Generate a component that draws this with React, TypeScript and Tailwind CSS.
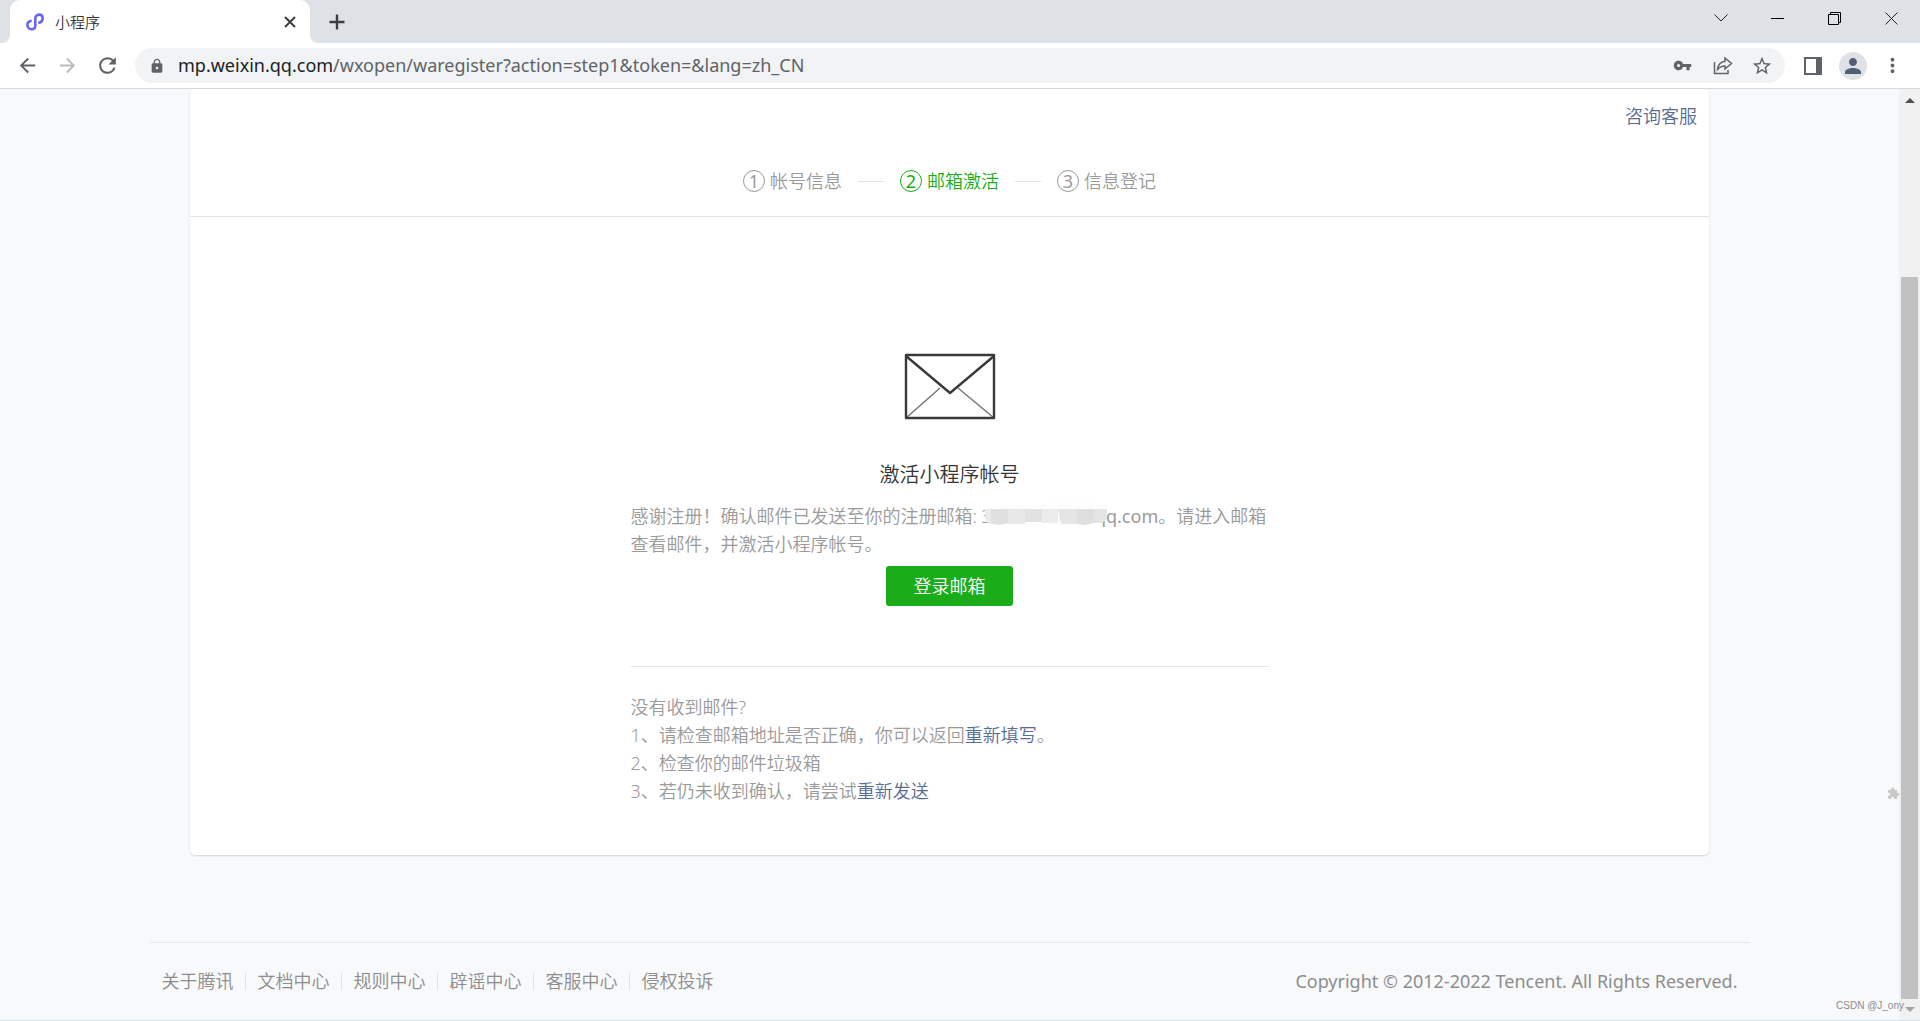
import React from 'react'
import {
  MdArrowBack,
  MdArrowForward,
  MdExtension,
  MdLock,
  MdMoreVert,
  MdPerson,
  MdRefresh,
  MdStarBorder,
  MdVpnKey,
} from 'react-icons/md'

const steps = [
  { number: 1, label: '帐号信息', active: false },
  { number: 2, label: '邮箱激活', active: true },
  { number: 3, label: '信息登记', active: false },
]

const footerLinks = ['关于腾讯', '文档中心', '规则中心', '辟谣中心', '客服中心', '侵权投诉']

function TabStrip() {
  return (
    <div className="flex h-[43px] items-stretch bg-[#dee1e6]">
      <div className="w-[10px] bg-white">
        <div className="h-full rounded-br-lg bg-[#dee1e6]" />
      </div>
      <div className="flex w-[300px] items-center rounded-t-[10px] bg-white pl-4 pr-[10px]">
        <svg width="18" height="18" viewBox="0 0 18 18" fill="none" stroke="#6467f0" strokeWidth="2.6" strokeLinecap="round">
          <path d="M4.6 7.9C2.7 8.4 1.4 9.9 1.4 11.8c0 2.6 1.8 4.4 4 4.4 2.3 0 3.9-1.6 3.9-3.8V5.5c0-2.2 1.6-3.9 3.8-3.9 2.1 0 3.6 1.5 3.6 3.6 0 2.2-1.5 4-3.4 4.5" />
        </svg>
        <span className="ml-[11px] flex-1 text-[15px] font-[350] leading-5">小程序</span>
        <button aria-label="关闭标签页" className="flex size-5 items-center justify-center">
          <svg width="12" height="12" viewBox="0 0 12 12" stroke="#3c4043" strokeWidth="2">
            <path d="M1 1l10 10M11 1L1 11" />
          </svg>
        </button>
      </div>
      <div className="w-[10px] bg-white">
        <div className="h-full rounded-bl-lg bg-[#dee1e6]" />
      </div>
      <button aria-label="新标签页" className="ml-[7px] flex w-5 items-center justify-center">
        <svg width="16" height="16" viewBox="0 0 16 16" stroke="#3c4043" strokeWidth="2.4">
          <path d="M8 0.5v15M0.5 8h15" />
        </svg>
      </button>
      <div className="flex-1" />
      <div className="flex h-9 items-stretch">
        <button aria-label="搜索标签页" className="flex w-[57px] items-center justify-center">
          <svg width="14" height="8" viewBox="0 0 14 8" fill="none" stroke="#202124">
            <path d="M0.5 0.5L7 7l6.5-6.5" />
          </svg>
        </button>
        <button aria-label="最小化" className="flex w-[57px] items-center justify-center">
          <span className="h-px w-[13px] bg-black" />
        </button>
        <button aria-label="还原" className="flex w-[57px] items-center justify-center">
          <svg width="13" height="13" viewBox="0 0 13 13" fill="none" stroke="#000">
            <path d="M0.5 2.5h10v10h-10zM2.5 2.5v-2h10v10h-2" />
          </svg>
        </button>
        <button aria-label="关闭" className="flex w-[57px] items-center justify-center">
          <svg width="13" height="13" viewBox="0 0 13 13" stroke="#202124">
            <path d="M0.5 0.5l12 12M12.5 0.5l-12 12" />
          </svg>
        </button>
      </div>
    </div>
  )
}

function Toolbar() {
  return (
    <div className="flex h-[46px] items-center border-b border-[#d7d9dc] bg-white pl-4 pr-4 text-[#5f6368]">
      <button aria-label="后退">
        <MdArrowBack size={23} />
      </button>
      <button aria-label="前进" className="ml-[17px] text-[#babcbe]">
        <MdArrowForward size={23} />
      </button>
      <button aria-label="重新加载" className="ml-4">
        <MdRefresh size={25} />
      </button>
      <div className="ml-[15px] flex h-[35px] flex-1 items-center rounded-full bg-[#f1f3f4] pl-[14px] pr-3">
        <MdLock size={16} />
        <a href="#" className="ml-[13px] flex-1 pb-[2px] text-[18px] leading-6">
          <span className="text-[#202124]">mp.weixin.qq.com</span>
          /wxopen/waregister?action=step1&amp;token=&amp;lang=zh_CN
        </a>
        <button aria-label="密码">
          <MdVpnKey size={19} />
        </button>
        <button aria-label="分享" className="ml-[21px]">
          <svg width="20" height="20" viewBox="0 0 20 20" fill="none" stroke="currentColor" strokeWidth="1.5">
            <path d="M1.5 6v11.5h13.5V14" />
            <path d="M12 2l6.5 5.5L12 13V10C8.5 10 6.5 11.2 4.5 13.5 5 9 7.5 5.8 12 5.2z" />
          </svg>
        </button>
        <button aria-label="收藏" className="ml-[18px]">
          <MdStarBorder size={22} />
        </button>
      </div>
      <button aria-label="侧边栏" className="ml-[19px]">
        <svg width="18" height="18" viewBox="0 0 18 18" fill="none">
          <path d="M1 1h16v16H1z" stroke="currentColor" strokeWidth="2" />
          <path d="M12 1h5v16h-5z" fill="currentColor" />
        </svg>
      </button>
      <button aria-label="个人资料" className="ml-[17px] flex size-7 items-center justify-center rounded-full bg-[#dee1e6] text-[#4f5d75]">
        <MdPerson size={24} />
      </button>
      <button aria-label="菜单" className="ml-[14px]">
        <MdMoreVert size={23} />
      </button>
    </div>
  )
}

function Steps() {
  return (
    <ol className="flex h-[71px] items-center justify-center border-b border-[#e4e4e4] text-[#9a9a9a]">
      {steps.map((step, index) => (
        <li key={step.number} className="flex items-center">
          {index > 0 && <span className="mx-4 h-px w-[26px] bg-[#e4e4e4]" />}
          <span className={step.active ? 'flex items-center gap-[5px] text-[#1aad19]' : 'flex items-center gap-[5px]'}>
            <span className="flex size-[22px] items-center justify-center rounded-full border border-current font-normal leading-5">
              {step.number}
            </span>
            {step.label}
          </span>
        </li>
      ))}
    </ol>
  )
}

function Envelope() {
  return (
    <svg width="92" height="68" viewBox="0 0 92 68" fill="none" strokeLinejoin="round">
      <path d="M2 65L36 35M90 65L54 35" stroke="#777" strokeWidth="1.5" />
      <path d="M2 2h88v63H2z" stroke="#3a3a3a" strokeWidth="2.4" />
      <path d="M2 3l44 37L90 3" stroke="#3a3a3a" strokeWidth="2.4" />
    </svg>
  )
}

// mosaic that hides the name part of the mail address
function Mosaic() {
  return (
    <svg width="122" height="26" viewBox="0 0 122 26" className="absolute left-2 top-0">
      <path d="M0 6Q60-1 122 2V10H0z" fill="#fdfdfd" />
      <path d="M0 7h22v15H5Q0 20 0 15z" fill="#ebebeb" />
      <path d="M6 7h17v14l-8 2-9-1z" fill="#e0e0e0" />
      <path d="M23 7h17v15H23z" fill="#e8e8e8" />
      <path d="M40 7h17v13H40z" fill="#e2e2e2" />
      <path d="M57 7h16v14H57z" fill="#ececec" />
      <path d="M73 7h26v15H76z" fill="#e5e5e5" />
      <path d="M92 7h17v14l-9 2-8-1z" fill="#dfdfdf" />
      <path d="M109 7h13v7q-1 6-6 7h-7z" fill="#e4e4e4" />
    </svg>
  )
}

function Scrollbar() {
  return (
    <div className="flex w-[21px] flex-col items-center bg-[#f1f1f1]">
      <div className="flex h-[22px] items-center">
        <svg width="10" height="5" viewBox="0 0 10 5" fill="#505050">
          <path d="M0 5l5-5 5 5z" />
        </svg>
      </div>
      <div className="flex-[166]" />
      <div className="w-[17px] flex-[722] bg-[#c1c1c1]" />
      <div className="flex h-[21px] items-center">
        <svg width="10" height="5" viewBox="0 0 10 5" fill="#a3a3a3">
          <path d="M0 0l5 5 5-5z" />
        </svg>
      </div>
    </div>
  )
}

export default function App() {
  return (
    <div className="relative flex min-h-screen flex-col bg-[#f8f9fb] font-['Noto_Sans','Noto_Sans_CJK_SC',sans-serif] text-[#353535]">
      <TabStrip />
      <Toolbar />
      <div className="flex flex-1 border-b border-[#cfe6ec]">
        <div className="flex flex-1 flex-col text-[18px] font-[350] leading-7">
          <main className="mx-auto w-4/5 rounded-[5px] bg-white pb-[50px] shadow-[0_1px_2px_rgba(0,0,0,0.15)]">
            <div className="flex h-[57px] items-center justify-end px-3 pb-1">
              <a href="#" className="text-[#576b95]">咨询客服</a>
            </div>
            <Steps />
            <section className="mx-auto flex w-[638px] flex-col items-center pt-[136px] text-[#9a9a9a]">
              <Envelope />
              <h1 className="mt-10 text-[20px] text-[#353535]">激活小程序帐号</h1>
              <p className="mt-[13px] w-full">
                感谢注册！确认邮件已发送至你的注册邮箱:
                <span className="relative inline-flex w-[118px] pl-1 align-top">
                  3
                  <Mosaic />
                </span>
                <span className="font-normal">qq.com</span>。请进入邮箱查看邮件，并激活小程序帐号。
              </p>
              <button className="mt-2 h-10 w-[127px] rounded-[3px] bg-[#1aad19] text-white">登录邮箱</button>
              <div className="mt-[60px] w-full border-t border-[#e4e6ee] pt-[26px]">
                <p>没有收到邮件?</p>
                <p>
                  1、请检查邮箱地址是否正确，你可以返回<a href="#" className="text-[#576b95]">重新填写</a>。
                </p>
                <p>2、检查你的邮件垃圾箱</p>
                <p>
                  3、若仍未收到确认，请尝试<a href="#" className="text-[#576b95]">重新发送</a>
                </p>
              </div>
            </section>
          </main>
          <footer className="mx-auto mt-[87px] flex w-[1600px] max-w-full items-center border-t border-[#e5e7eb] px-3 pt-6 text-[#8d8d8d]">
            <nav className="flex flex-1 items-center">
              {footerLinks.map((link, index) => (
                <React.Fragment key={link}>
                  {index > 0 && <span className="ml-[11px] mr-3 h-[18px] w-px bg-[#e1e3e6]" />}
                  <a href="#">{link}</a>
                </React.Fragment>
              ))}
            </nav>
            <p className="font-normal">Copyright © 2012-2022 Tencent. All Rights Reserved.</p>
          </footer>
        </div>
        <Scrollbar />
      </div>
      <MdExtension size={13} className="absolute bottom-[221px] right-5 text-[#c8c8c8]" />
      <span className="absolute bottom-[7px] right-4 font-['Liberation_Sans'] text-[10px] leading-4 text-[#8b8b8b]">CSDN @J_ony</span>
    </div>
  )
}
